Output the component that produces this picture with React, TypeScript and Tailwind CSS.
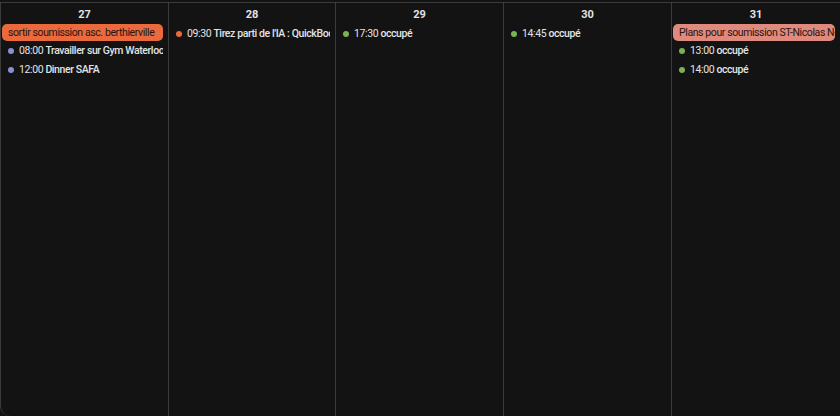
type TimedEvent = { time: string; title: string; dot: string }
type Day = { num: number; chip?: { label: string; bg: string }; events: TimedEvent[] }

const days: Day[] = [
  {
    num: 27,
    chip: { label: 'sortir soumission asc. berthierville', bg: 'bg-[#ea6a3e]' },
    events: [
      { time: '08:00', title: 'Travailler sur Gym Waterloo', dot: 'bg-[#8b8fd0]' },
      { time: '12:00', title: 'Dinner SAFA', dot: 'bg-[#8b8fd0]' },
    ],
  },
  {
    num: 28,
    events: [{ time: '09:30', title: "Tirez parti de l'IA : QuickBooks", dot: 'bg-[#ea6a3e]' }],
  },
  { num: 29, events: [{ time: '17:30', title: 'occupé', dot: 'bg-[#7cb152]' }] },
  { num: 30, events: [{ time: '14:45', title: 'occupé', dot: 'bg-[#7cb152]' }] },
  {
    num: 31,
    chip: { label: 'Plans pour soumission ST-Nicolas Nord', bg: 'bg-[#e08a7e]' },
    events: [
      { time: '13:00', title: 'occupé', dot: 'bg-[#7cb152]' },
      { time: '14:00', title: 'occupé', dot: 'bg-[#7cb152]' },
    ],
  },
]

function DayColumn({ day, first }: { day: Day; first: boolean }) {
  return (
    <div className={`flex flex-col min-w-0 border-l border-[#3c3c3c] ${first ? 'rounded-bl-[10px]' : ''}`}>
      <div className="h-[21px] flex items-end justify-center text-[11px] font-bold text-[#e3e3e3] leading-none pb-[4px]">
        {day.num}
      </div>
      <div className="flex flex-col pr-[5px] pl-[1px]">
        {day.chip && (
          <div
            className={`${day.chip.bg} h-[17px] rounded-[5px] px-[6px] text-[10.5px] tracking-[-0.4px] leading-[17px] text-[#2a1410] whitespace-nowrap overflow-hidden`}
          >
            {day.chip.label}
          </div>
        )}
        {day.events.map((e) => (
          <div
            key={e.time}
            className="h-[19px] flex items-center gap-[5px] pl-[6px] whitespace-nowrap overflow-hidden text-[10.5px] tracking-[-0.4px] text-[#e3e3e3]"
          >
            <span className={`${e.dot} w-[6px] h-[6px] rounded-full shrink-0`} />
            <span>
              {e.time} <span className="font-medium">{e.title}</span>
            </span>
          </div>
        ))}
      </div>
    </div>
  )
}

export default function App() {
  return (
    <div className="w-[840px] h-[416px] bg-[#131313] pt-[2px]" style={{ fontFamily: 'Roboto, "Liberation Sans", sans-serif' }}>
      <div className="h-full grid grid-cols-[168px_167px_168px_168px_169px] border-t border-[#3c3c3c] rounded-bl-[10px]">
        {days.map((d, i) => (
          <DayColumn key={d.num} day={d} first={i === 0} />
        ))}
      </div>
    </div>
  )
}
